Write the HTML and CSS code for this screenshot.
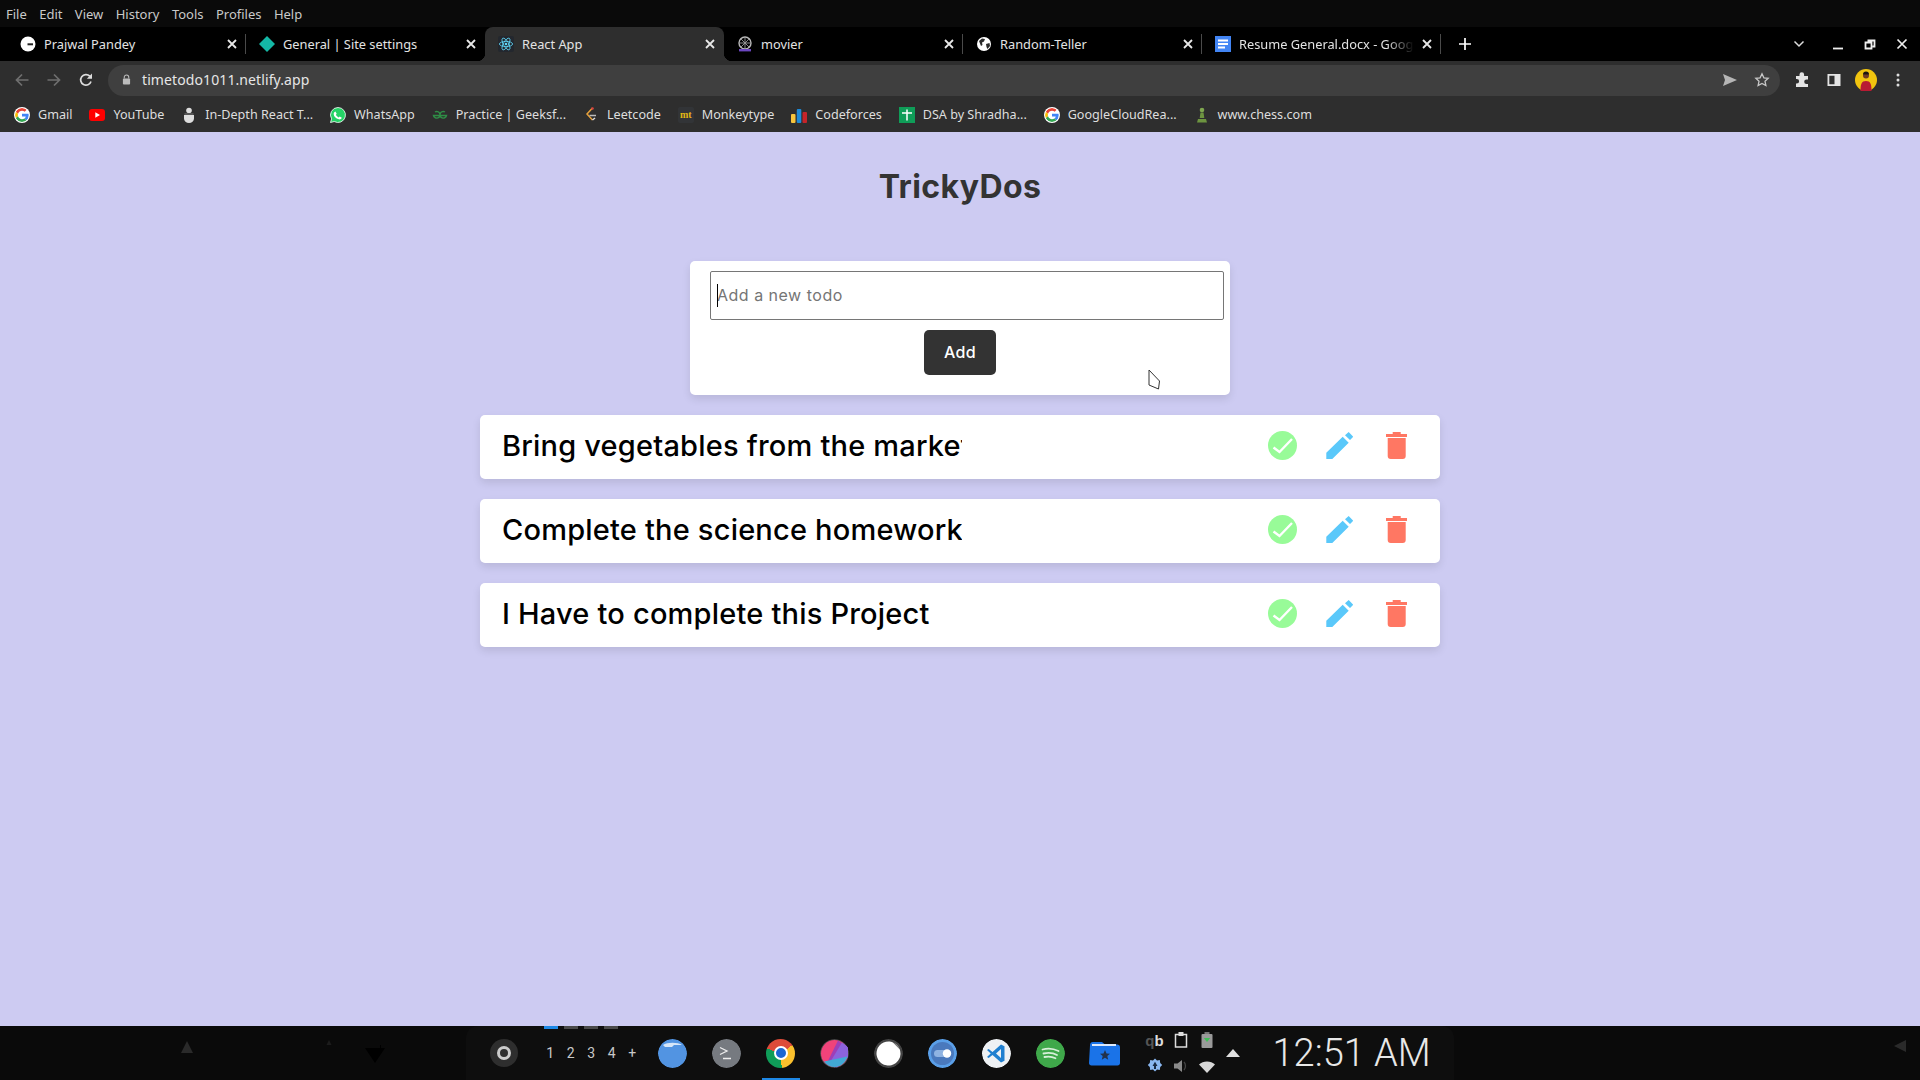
FILE: index.html
```html
<!DOCTYPE html>
<html lang="en">
<head>
    <meta charset="UTF-8">
    <meta name="viewport" content="width=device-width, initial-scale=1.0">
    <title>React App</title>
    <link rel="stylesheet" href="styles.css">
</head>
<body>
    <svg class="defs" width="0" height="0">
        <symbol id="google" viewBox="0 0 48 48">
            <path fill="#EA4335" d="M24 9.5c3.54 0 6.71 1.22 9.21 3.6l6.85-6.85C35.9 2.38 30.47 0 24 0 14.62 0 6.51 5.38 2.56 13.22l7.98 6.19C12.43 13.72 17.74 9.5 24 9.5z"/>
            <path fill="#4285F4" d="M46.98 24.55c0-1.57-.15-3.09-.38-4.55H24v9.02h12.94c-.58 2.96-2.26 5.48-4.78 7.18l7.73 6c4.51-4.18 7.09-10.36 7.09-17.65z"/>
            <path fill="#FBBC05" d="M10.53 28.59c-.48-1.45-.76-2.99-.76-4.59s.27-3.14.76-4.59l-7.98-6.19C.92 16.46 0 20.12 0 24c0 3.88.92 7.54 2.56 10.78l7.97-6.19z"/>
            <path fill="#34A853" d="M24 48c6.48 0 11.93-2.13 15.89-5.81l-7.73-6c-2.15 1.45-4.92 2.3-8.16 2.3-6.26 0-11.57-4.22-13.47-9.91l-7.98 6.19C6.51 42.62 14.62 48 24 48z"/>
        </symbol>
        <symbol id="close" viewBox="0 0 10 10">
            <path d="M1 1l8 8M9 1l-8 8" fill="none" stroke="currentColor" stroke-width="1.8"/>
        </symbol>
        <symbol id="check" viewBox="0 0 29 29">
            <circle cx="14.5" cy="14.5" r="14.5" fill="#98fb98"/>
            <path d="M5.5 16.5l6 4.5L24 8" fill="none" stroke="#fff" stroke-width="2.4"/>
        </symbol>
        <symbol id="pencil" viewBox="0 0 27 27">
            <path fill="#5ac8fa" d="M.3 20.7L16.7 4.7l6 6L6.3 27H.3zM22.7 0l4.6 4.7L24 8l-5-4.7z"/>
        </symbol>
        <symbol id="trash" viewBox="0 0 21 27">
            <path fill="#ff7763" d="M6.7 0h8v2h6.6v3H0V2h6.7zM1.7 6h18v18a3 3 0 0 1-3 3h-12a3 3 0 0 1-3-3z"/>
        </symbol>
    </svg>

    <div class="menubar">
        <span>File</span><span>Edit</span><span>View</span><span>History</span><span>Tools</span><span>Profiles</span><span>Help</span>
    </div>

    <div class="tabstrip">
        <div class="tab sep">
            <svg class="favicon" viewBox="0 0 16 16"><circle cx="8" cy="8" r="7.500" fill="#fff"/><path d="M11.500 5.200A4.500 4.500 0 1 0 12.500 8.700H8.200" fill="none" stroke="#fff" stroke-width="1"/><path d="M7.500 7.300h5.500v2H7.500z" fill="#222"/></svg>
            <span class="tab-title">Prajwal Pandey</span>
            <svg class="tab-close"><use href="#close"/></svg>
        </div>
        <div class="tab">
            <svg class="favicon" viewBox="0 0 16 16"><path d="M8 0l8 8-8 8-8-8z" fill="#14b8a6"/></svg>
            <span class="tab-title">General | Site settings</span>
            <svg class="tab-close"><use href="#close"/></svg>
        </div>
        <div class="tab tab-active">
            <svg class="favicon" viewBox="0 0 16 16">
                <rect width="16" height="16" rx="2" fill="#23272e"/>
                <g fill="none" stroke="#61dafb" stroke-width=".8">
                    <ellipse cx="8" cy="8" rx="6.6" ry="2.6"/>
                    <ellipse cx="8" cy="8" rx="6.6" ry="2.6" transform="rotate(60 8 8)"/>
                    <ellipse cx="8" cy="8" rx="6.6" ry="2.6" transform="rotate(120 8 8)"/>
                </g>
                <circle cx="8" cy="8" r="1.3" fill="#61dafb"/>
            </svg>
            <span class="tab-title">React App</span>
            <svg class="tab-close"><use href="#close"/></svg>
        </div>
        <div class="tab sep">
            <svg class="favicon" viewBox="0 0 16 16">
                <circle cx="8" cy="7" r="6" fill="none" stroke="#b9b9b9" stroke-width="1.4"/>
                <path d="M8 1v12M2 7h12M4 3l8 8M12 3l-8 8" stroke="#9a9a9a" stroke-width=".9"/>
                <rect x="2" y="13" width="12" height="2.4" fill="#6b46c1"/>
            </svg>
            <span class="tab-title">movier</span>
            <svg class="tab-close"><use href="#close"/></svg>
        </div>
        <div class="tab sep">
            <svg class="favicon" viewBox="0 0 16 16">
                <circle cx="8" cy="8" r="7" fill="#fff"/>
                <path d="M3 5l3-2.500 3 .5-1 2.500-2 1 .5 2.500-1.500 1zM10 8l3.500-1 .5 3-2.500 3-1-2z" fill="#2b2b2b"/>
            </svg>
            <span class="tab-title">Random-Teller</span>
            <svg class="tab-close"><use href="#close"/></svg>
        </div>
        <div class="tab sep">
            <svg class="favicon" viewBox="0 0 16 16">
                <rect width="16" height="18" y="-1" rx="1.500" fill="#4285f4"/>
                <path d="M3 3.500h10v2H3zM3 7h10v2H3zM3 10.500h7v2H3z" fill="#fff"/>
            </svg>
            <span class="tab-title tab-fade">Resume General.docx - Google Docs</span>
            <svg class="tab-close"><use href="#close"/></svg>
        </div>
        <svg class="newtab" viewBox="0 0 12 12"><path d="M6 0v12M0 6h12" stroke="#fff" stroke-width="1.700"/></svg>
        <div class="win-controls">
            <svg class="win-chevron" viewBox="0 0 12 12"><path d="M1.500 3.500L6 8l4.500-4.500" fill="none" stroke="#ddd" stroke-width="1.500"/></svg>
            <svg viewBox="0 0 12 12"><path d="M1 10.500h10" stroke="#eee" stroke-width="1.800"/></svg>
            <svg viewBox="0 0 12 12"><path d="M3.500 2.500h7v6h-2M1.500 4.500h6v6h-6z" fill="none" stroke="#eee" stroke-width="1.800"/></svg>
            <svg viewBox="0 0 12 12"><path d="M1.500 1.500l9 9M10.500 1.500l-9 9" stroke="#eee" stroke-width="1.700"/></svg>
        </div>
    </div>

    <div class="toolbar">
        <div class="tool-btn"><svg viewBox="0 0 16 16"><path d="M14.500 8h-12M8 2.500L2.500 8 8 13.500" fill="none" stroke="#6f6f6f" stroke-width="1.700"/></svg></div>
        <div class="tool-btn"><svg viewBox="0 0 16 16"><path d="M1.500 8h12M8 2.500L13.500 8 8 13.500" fill="none" stroke="#6f6f6f" stroke-width="1.700"/></svg></div>
        <div class="tool-btn"><svg viewBox="0 0 16 16"><path d="M13 9.500A5.300 5.300 0 1 1 11.800 4.200" fill="none" stroke="#ddd" stroke-width="1.700"/><path d="M14 1.500v5.200H8.800z" fill="#ddd"/></svg></div>
        <div class="omnibox">
            <svg class="lock" viewBox="0 0 10 12"><path d="M2.500 5V3.500a2.500 2.500 0 0 1 5 0V5" fill="none" stroke="#bbb" stroke-width="1.200"/><rect x="1" y="5" width="8" height="6.500" rx="1" fill="#bbb"/></svg>
            <span class="url">timetodo1011.netlify.app</span>
            <svg class="omni-icon omni-send" viewBox="0 0 16 16"><path d="M1 2l14 6-14 6 2-6z" fill="#b5b5b5"/></svg>
            <svg class="omni-icon" viewBox="0 0 16 16"><path d="M8 1.800l1.900 4 4.300.5-3.200 3 .9 4.300L8 11.500l-3.900 2.100.9-4.300-3.200-3 4.300-.5z" fill="none" stroke="#c8c8c8" stroke-width="1.300"/></svg>
        </div>
        <div class="tool-btn"><svg class="puzzle" viewBox="0 0 16 16"><path d="M5.500 2.500a2.300 2.300 0 0 1 4.600 0V4H14v3.500h-1.500a2.300 2.300 0 0 0 0 4.600H14V15H2v-3.500h.8a2.300 2.300 0 0 0 0-4.600H2V4h3.500z" fill="#e4e4e4"/></svg></div>
        <div class="tool-btn"><svg viewBox="0 0 16 16"><path d="M1.500 2h13v12h-13zM3.300 3.800v8.400h5.200V3.800z" fill="#e4e4e4" fill-rule="evenodd"/></svg></div>
        <div class="tool-btn">
            <svg class="avatar" viewBox="0 0 22 22">
                <circle cx="11" cy="11" r="11" fill="#f1c40f"/>
                <path d="M5.500 22c0-7 1-10 5.500-10s5.500 3 5.500 10z" fill="#b81b33"/>
                <circle cx="11" cy="6.500" r="3" fill="#6d3b25"/>
                <path d="M8 5.500a3 3 0 0 1 6 0z" fill="#1d1411"/>
            </svg>
        </div>
        <div class="tool-btn"><svg viewBox="0 0 16 16"><circle cx="8" cy="3" r="1.500" fill="#ddd"/><circle cx="8" cy="8" r="1.500" fill="#ddd"/><circle cx="8" cy="13" r="1.500" fill="#ddd"/></svg></div>
    </div>

    <div class="bookmarks">
        <div class="bookmark"><svg class="favicon g-icon"><use href="#google"/></svg>Gmail</div>
        <div class="bookmark"><svg class="favicon" viewBox="0 0 16 16"><rect y="2" width="16" height="12" rx="3" fill="#f00"/><path d="M6.300 5.200L11 8l-4.700 2.800z" fill="#fff"/></svg>YouTube</div>
        <div class="bookmark"><svg class="favicon" viewBox="0 0 16 16"><circle cx="8" cy="3.500" r="2.800" fill="#ddd"/><path d="M3 8h10v3.500a5 4.500 0 0 1-10 0z" fill="#ddd"/><rect x="3.500" y="6" width="9" height="2" fill="#555"/></svg>In-Depth React T...</div>
        <div class="bookmark"><svg class="favicon" viewBox="0 0 16 16"><path d="M8 .5a7.500 7.500 0 0 0-6.400 11.400L.5 15.500l3.700-1A7.500 7.500 0 1 0 8 .5z" fill="#25d366" stroke="#fff" stroke-width=".8"/><path d="M5.400 4.500l1.300 2.300-.8 1c.7 1.300 1.600 2.100 2.800 2.700l1-.9 2.100 1.200c-.4 1.300-1.900 1.800-3 1.500C5.800 11.600 3.900 9.400 3.700 7.200c-.1-1.200.6-2.400 1.700-2.700z" fill="#fff"/></svg>WhatsApp</div>
        <div class="bookmark"><svg class="favicon" viewBox="0 0 16 16"><path d="M8 8.500H14.500A3.300 3.300 0 1 1 13 5M8 8.500H1.500A3.300 3.300 0 1 0 3 5" fill="none" stroke="#2f8d46" stroke-width="1.400"/></svg>Practice | Geeksf...</div>
        <div class="bookmark"><svg class="favicon" viewBox="0 0 16 16"><path d="M9.500 1L4 7l5.500 6" fill="none" stroke="#e7a13a" stroke-width="1.500"/><path d="M6.500 8.500H13" stroke="#bbb" stroke-width="1.500"/><path d="M9.500 13L12 11" stroke="#ddd" stroke-width="1.500"/><circle cx="9.500" cy="1.500" r="1.300" fill="#d9453f"/></svg>Leetcode</div>
        <div class="bookmark"><span class="favicon mt-icon">mt</span>Monkeytype</div>
        <div class="bookmark"><svg class="favicon" viewBox="0 0 16 16"><rect y="7" width="4.500" height="9" rx="1" fill="#f6c43d"/><rect x="5.800" y="2" width="4.500" height="14" rx="1" fill="#1d8ad8"/><rect x="11.500" y="5" width="4.500" height="11" rx="1" fill="#c4242a"/></svg>Codeforces</div>
        <div class="bookmark"><svg class="favicon" viewBox="0 0 16 16"><rect width="16" height="16" fill="#0f9d58"/><path d="M8 2.500v11M3 6h10" stroke="#fff" stroke-width="1.500"/></svg>DSA by Shradha...</div>
        <div class="bookmark"><svg class="favicon g-icon"><use href="#google"/></svg>GoogleCloudRea...</div>
        <div class="bookmark"><svg class="favicon" viewBox="0 0 16 16"><circle cx="8" cy="3" r="2.300" fill="#7fa650"/><path d="M6.500 5.500h3l.8 5.500H5.700zM4 12h8l1 3.500H3z" fill="#6d9440"/></svg>www.chess.com</div>
    </div>

    <main class="page">
        <h1 class="app-title">TrickyDos</h1>

        <form class="todo-form">
            <input class="todo-input" type="text" placeholder="Add a new todo">
            <span class="caret"></span>
            <button class="add-btn" type="button">Add</button>
            <svg class="mouse" viewBox="0 0 13 21"><path d="M1 1l10.500 11-1 8L1 16z" fill="#fff" stroke="#333" stroke-width="1"/></svg>
        </form>

        <ul class="todo-list">
            <li class="todo-item">
                <span class="todo-text">Bring vegetables from the market</span>
                <div class="todo-actions">
                    <svg class="icon-check"><use href="#check"/></svg>
                    <svg class="icon-edit"><use href="#pencil"/></svg>
                    <svg class="icon-trash"><use href="#trash"/></svg>
                </div>
            </li>
            <li class="todo-item">
                <span class="todo-text">Complete the science homework</span>
                <div class="todo-actions">
                    <svg class="icon-check"><use href="#check"/></svg>
                    <svg class="icon-edit"><use href="#pencil"/></svg>
                    <svg class="icon-trash"><use href="#trash"/></svg>
                </div>
            </li>
            <li class="todo-item">
                <span class="todo-text">I Have to complete this Project</span>
                <div class="todo-actions">
                    <svg class="icon-check"><use href="#check"/></svg>
                    <svg class="icon-edit"><use href="#pencil"/></svg>
                    <svg class="icon-trash"><use href="#trash"/></svg>
                </div>
            </li>
        </ul>
    </main>

    <footer class="taskbar">
        <svg class="ghost ghost-a" viewBox="0 0 12 12"><path d="M6 0l6 12H0z" fill="#2a2a2a"/></svg>
        <svg class="ghost ghost-c" viewBox="0 0 12 12"><path d="M6 0l6 12H0z" fill="#1c1c1c"/></svg>
        <svg class="ghost ghost-d" viewBox="0 0 20 18"><path d="M0 3h20L10 18z" fill="#000"/><path d="M15 0h1v4h-1z" fill="#000"/></svg>
        <svg class="ghost ghost-b" viewBox="0 0 12 12"><path d="M12 0v12L0 6z" fill="#2a2a2a"/></svg>
        <div class="panel">
            <div class="launcher"><span></span></div>
            <div class="workspaces">
                <div class="ws-strip"><i class="ws-on"></i><i></i><i></i><i></i></div>
                <span>1</span><span>2</span><span>3</span><span>4</span><span>+</span>
            </div>
            <div class="dock">
                <div class="dock-item">
                    <svg viewBox="0 0 29 29"><circle cx="14.500" cy="14.500" r="14.500" fill="#5294e2"/><path d="M5 6c4-3 15-3 19 0h-8l-2 2H7z" fill="#d6e6f8"/></svg>
                </div>
                <div class="dock-item">
                    <svg viewBox="0 0 29 29"><circle cx="14.500" cy="14.500" r="14.500" fill="#767a80"/><path d="M8 8.500l7 3.500-7 3.500M11 19.500h8" fill="none" stroke="#eee" stroke-width="1.300"/></svg>
                </div>
                <div class="dock-item dock-active"><span class="chrome-logo"><span></span></span></div>
                <div class="dock-item">
                    <svg viewBox="0 0 29 29">
                        <circle cx="14.500" cy="14.500" r="14.500" fill="#444"/>
                        <circle cx="14.500" cy="14.500" r="13.500" fill="#f0437a"/>
                        <path d="M18 1.500L7 24l8 4.500L28 18V8z" fill="#9d3fb8"/>
                        <path d="M22 3.500L9 25l8 3.500L28 18V8z" fill="#8c63dc"/>
                        <path d="M4 22.500L27.500 17.500C25.500 24 20 28 14.500 28 10 28 6.500 26 4 22.500z" fill="#41a9d4"/>
                    </svg>
                </div>
                <div class="dock-item">
                    <svg viewBox="0 0 29 29"><circle cx="14.500" cy="14.500" r="14.500" fill="#444"/><path d="M14.500 2.500c1.800 0 3 .3 4.500.9l6.700 6.800A12 12 0 1 1 14.500 2.500z" fill="#fff"/><path d="M19.500 3.500l6.300 6.500c-1.500-4-3.500-5.500-6.300-6.500z" fill="#999"/></svg>
                </div>
                <div class="dock-item">
                    <svg viewBox="0 0 29 29"><circle cx="14.500" cy="14.500" r="14.500" fill="#5a9fe8"/><circle cx="14.500" cy="14.500" r="11.500" fill="#4a79bd"/><rect x="6" y="11" width="17" height="7" rx="3.500" fill="#8fb3e2"/><circle cx="19" cy="14.500" r="4.200" fill="#fff"/></svg>
                </div>
                <div class="dock-item">
                    <svg viewBox="0 0 29 29"><circle cx="14.500" cy="14.500" r="14.500" fill="#eef1f4"/><path d="M19 5.500l3.500 1.700v14.600L19 23.500 10.500 16l-3.800 3-1.700-1 3.700-3.500L5 11l1.700-1 3.800 3zM19 10l-5 4.500 5 4.500z" fill="#1f7fd0"/></svg>
                </div>
                <div class="dock-item">
                    <svg viewBox="0 0 29 29"><circle cx="14.500" cy="14.500" r="14.500" fill="#3fa84a"/><path d="M6.500 10.500c5-1.500 11-1 16 1.500M7.500 14.500c4.500-1 9.500-.8 13.500 1.500M8.500 18c4-.8 7.500-.5 11 1.200" fill="none" stroke="#d8efd9" stroke-width="1.800" stroke-linecap="round"/></svg>
                </div>
                <div class="dock-item">
                    <svg class="folder" viewBox="0 0 32 25"><path d="M1 4.500C1 2 2 1 4 1h9l3 2.500h12c2 0 3 1 3 3V22c0 1.500-1 2.500-2.500 2.500h-26C1 24.500 0 23.500 0 22z" fill="#1a73e8"/><path d="M3 3h24v2H3z" fill="#dce9fb"/><path d="M16 9l1.500 3.500 3.500.3-2.700 2.300.9 3.600L16 16.800l-3.200 1.900.9-3.600-2.700-2.300 3.500-.3z" fill="#22324a"/></svg>
                </div>
            </div>
            <div class="tray">
                <span class="tray-qb"><b>q</b>b</span>
                <svg viewBox="0 0 16 18"><path d="M2.500 3.500h11v12.500h-11z" fill="none" stroke="#ddd" stroke-width="1.500"/><rect x="5.500" y="1" width="5" height="4" fill="#ddd"/></svg>
                <svg viewBox="0 0 16 18"><rect x="2.500" y="3" width="11" height="14" rx="1" fill="#9a9a9a"/><rect x="5.500" y="1" width="5" height="2" fill="#777"/><path d="M4.800 7h6.400L8 11z" fill="#3fbf57"/></svg>
                <svg viewBox="0 0 16 18"><path d="M8 1.500l2 2 2.800-.4.400 2.800 2 2.100-2 2.100-.4 2.800-2.800-.4-2 2-2-2-2.800.4-.4-2.800-2-2.100 2-2.100.4-2.800 2.800.4z" fill="#8ab8f2"/><path d="M8 4.800L10.500 9H9v3H7V9H5.500z" fill="#1a2c46"/></svg>
                <svg viewBox="0 0 16 18"><path d="M1 6.500h3.500L9 3v12L4.500 11.500H1z" fill="#8a8a8a"/><path d="M11 5c2 2 2 6 0 8" fill="none" stroke="#444" stroke-width="1.300"/></svg>
                <svg viewBox="0 0 16 18"><path d="M0 7.500C4 3.500 12 3.500 16 7.500L8 16z" fill="#d8d8d8"/></svg>
            </div>
            <svg class="tray-up" viewBox="0 0 14 8"><path d="M7 0l7 8H0z" fill="#e0e0e0"/></svg>
            <div class="clock">12:51 AM</div>
        </div>
    </footer>
</body>
</html>
```

FILE: styles.css
```css
* {
    box-sizing: border-box;
}
body {
    margin: 0;
    height: 100vh;
    display: flex;
    flex-direction: column;
    overflow: hidden;
    font-family: "Noto Sans", sans-serif;
    background-color: #0a0a0a;
}
.defs {
    position: absolute;
}

/* Browser chrome */
.menubar {
    height: 27px;
    display: flex;
    align-items: center;
    gap: 12.4px;
    padding-left: 6px;
    background-color: #0a0a0a;
    color: #c9c9c9;
    font-size: 13px;
}
.tabstrip {
    height: 34px;
    display: flex;
    align-items: center;
    padding-left: 7px;
    background-color: #000;
}
.tab {
    position: relative;
    flex: 0 0 239px;
    min-width: 0;
    height: 34px;
    display: flex;
    align-items: center;
    gap: 8px;
    padding: 0 9px 0 13px;
    color: #e3e3e3;
    font-size: 12.8px;
}
.tab.sep::after {
    content: "";
    position: absolute;
    right: 0;
    top: 7px;
    width: 1px;
    height: 20px;
    background-color: #4a4a4a;
}
.tab-active {
    background-color: #2e2e2e;
    border-radius: 8px 8px 0 0;
}
.tab-active::before,
.tab-active::after {
    content: "";
    position: absolute;
    bottom: 0;
    width: 8px;
    height: 8px;
}
.tab-active::before {
    left: -8px;
    background: radial-gradient(circle at 0 0, transparent 8px, #2e2e2e 8.5px);
}
.tab-active::after {
    right: -8px;
    background: radial-gradient(circle at 100% 0, transparent 8px, #2e2e2e 8.5px);
}
.favicon {
    flex: 0 0 16px;
    width: 16px;
    height: 16px;
}
.g-icon {
    background-color: #fff;
    border-radius: 50%;
    padding: 1px;
}
.tab-title {
    flex: 1;
    min-width: 0;
    overflow: hidden;
    white-space: nowrap;
}
.tab-fade {
    -webkit-mask-image: linear-gradient(to right, #000 84%, transparent 100%);
    mask-image: linear-gradient(to right, #000 84%, transparent 100%);
}
.tab-close {
    flex: 0 0 10px;
    width: 10px;
    height: 10px;
    color: #e8e8e8;
}
.newtab {
    width: 12px;
    height: 12px;
    margin-left: 18px;
}
.win-controls {
    margin-left: auto;
    display: flex;
    align-items: center;
    padding-right: 2px;
}
.win-controls svg {
    width: 12px;
    height: 12px;
    margin: 0 10px;
}
.win-controls .win-chevron {
    margin-right: 17px;
}

.toolbar {
    height: 38px;
    display: flex;
    align-items: flex-start;
    padding: 4px 6px 0;
    background-color: #2e2e2e;
}
.tool-btn {
    flex: 0 0 32px;
    height: 30px;
    display: flex;
    align-items: center;
    justify-content: center;
}
.tool-btn svg {
    width: 16px;
    height: 16px;
}
.tool-btn .avatar {
    width: 22px;
    height: 22px;
}
.omnibox {
    flex: 1;
    height: 31px;
    display: flex;
    align-items: center;
    margin: 0 6px;
    padding: 0 10px 2px 14px;
    border-radius: 16px;
    background-color: #3f3f3f;
}
.lock {
    width: 9px;
    height: 11px;
}
.url {
    flex: 1;
    margin-left: 11px;
    color: #e6e6e6;
    font-size: 14px;
    letter-spacing: 0.1px;
}
.omni-icon {
    width: 16px;
    height: 16px;
}
.omni-send {
    margin-right: 16px;
}

.bookmarks {
    height: 33px;
    display: flex;
    align-items: center;
    gap: 16.9px;
    padding: 0 0 2px 14px;
    background-color: #2e2e2e;
    color: #dedede;
    font-size: 12.6px;
}
.bookmark {
    display: flex;
    align-items: center;
    gap: 8px;
    white-space: nowrap;
}
.mt-icon {
    background-color: #323437;
    border-radius: 2px;
    color: #e2b714;
    font-family: "Liberation Serif", serif;
    font-weight: bold;
    font-size: 10px;
    line-height: 16px;
    text-align: center;
}

/* The todo app */
.page {
    flex: 1;
    display: flex;
    flex-direction: column;
    align-items: center;
    background-color: #cdcbf2;
    font-family: Inter, sans-serif;
}
.app-title {
    margin: 25px 0 0;
    height: 104px;
    color: #333;
    font-size: 32px;
    font-weight: 700;
    line-height: 60px;
    letter-spacing: 0.4px;
}
.todo-form {
    position: relative;
    width: 540px;
    height: 134px;
    padding: 10px 0 0 20px;
    background-color: #fff;
    border-radius: 5px;
    box-shadow: 0 4px 8px rgba(0, 0, 0, 0.1);
    text-align: center;
}
.todo-input {
    display: block;
    width: 514px;
    height: 49px;
    padding: 0 6px 2px;
    border: 1px solid #767676;
    border-radius: 2px;
    font-family: Inter, sans-serif;
    font-size: 16px;
    letter-spacing: 0.5px;
}
.todo-input::placeholder {
    color: #757575;
}
.caret {
    position: absolute;
    left: 27px;
    top: 23px;
    width: 1px;
    height: 23px;
    background-color: #000;
}
.add-btn {
    display: block;
    width: 72px;
    height: 45px;
    margin: 10px 0 0 214px;
    padding: 0 0 2px;
    border: none;
    border-radius: 5px;
    background-color: #333;
    color: #fff;
    font-family: Inter, sans-serif;
    font-size: 16px;
    font-weight: 500;
    letter-spacing: 0.3px;
}
.mouse {
    position: absolute;
    left: 458px;
    top: 108px;
    width: 13px;
    height: 21px;
}
.todo-list {
    list-style: none;
    width: 960px;
    margin: 20px 0 0;
    padding: 0;
    display: flex;
    flex-direction: column;
    gap: 20px;
}
.todo-item {
    height: 64px;
    display: flex;
    align-items: center;
    justify-content: space-between;
    padding: 0 15px 3px 22px;
    background-color: #fff;
    border-radius: 5px;
    box-shadow: 0 4px 8px rgba(0, 0, 0, 0.1);
}
.todo-text {
    width: 460px;
    overflow: hidden;
    white-space: nowrap;
    color: #000;
    font-size: 29px;
    font-weight: 500;
    letter-spacing: 0.2px;
}
.todo-actions {
    display: grid;
    grid-template-columns: repeat(3, 57px);
    justify-items: center;
    align-items: center;
}
.icon-check {
    width: 29px;
    height: 29px;
}
.icon-edit {
    width: 27px;
    height: 27px;
}
.icon-trash {
    width: 21px;
    height: 27px;
}

/* Desktop panel */
.taskbar {
    position: relative;
    height: 54px;
    display: flex;
    justify-content: center;
    background-color: #0a0a0a;
}
.ghost {
    position: absolute;
    width: 12px;
    height: 12px;
}
.ghost-a {
    left: 181px;
    top: 15px;
}
.ghost-b {
    right: 14px;
    top: 14px;
}
.ghost-c {
    left: 325px;
    top: 14px;
    width: 8px;
    height: 5px;
}
.ghost-d {
    left: 365px;
    top: 19px;
    width: 20px;
    height: 18px;
}
.panel {
    position: relative;
    width: 988px;
    display: flex;
    align-items: center;
    padding-left: 24px;
    background-color: #0e0e0e;
    border-radius: 12px 12px 0 0;
}
.launcher {
    flex: 0 0 28px;
    height: 28px;
    display: flex;
    align-items: center;
    justify-content: center;
    border-radius: 50%;
    background-color: #2e2e2e;
}
.launcher span {
    width: 14px;
    height: 14px;
    border: 3px solid #ccc;
    border-radius: 50%;
}
.workspaces {
    display: flex;
    margin-left: 22px;
    color: #c8c8c8;
    font-family: Roboto, sans-serif;
    font-size: 14px;
}
.workspaces span {
    width: 20.5px;
    text-align: center;
}
.ws-strip {
    position: absolute;
    left: 78px;
    top: 0;
    display: flex;
    gap: 6px;
}
.ws-strip i {
    width: 14px;
    height: 3px;
    background-color: #4a4a4a;
}
.ws-strip .ws-on {
    background-color: #1e88e5;
}
.dock {
    display: flex;
    margin-left: 3px;
}
.dock-item {
    position: relative;
    flex: 0 0 54px;
    height: 54px;
    display: flex;
    align-items: center;
    justify-content: center;
}
.dock-item svg,
.dock-item > span {
    width: 29px;
    height: 29px;
    border-radius: 50%;
}
.dock-item .folder {
    width: 32px;
    height: 25px;
    border-radius: 0;
}
.dock-active::after {
    content: "";
    position: absolute;
    left: 8px;
    bottom: 0;
    width: 38px;
    height: 2px;
    background-color: #1e88e5;
}
.chrome-logo {
    display: flex;
    align-items: center;
    justify-content: center;
    background: conic-gradient(from -70deg, #dd4b39 0 125deg, #fbc02d 125deg 245deg, #0f9d58 245deg 360deg);
}
.dock-item .chrome-logo span {
    width: 14px;
    height: 14px;
    border: 2px solid #fff;
    border-radius: 50%;
    background-color: #1a66d2;
}
.tray {
    display: grid;
    grid-template-columns: repeat(3, 26px);
    grid-template-rows: 26px 26px;
    justify-items: center;
    align-items: center;
    margin-left: 10px;
}
.tray svg {
    width: 16px;
    height: 18px;
}
.tray-qb {
    color: #ddd;
    font-family: "Liberation Sans", sans-serif;
    font-size: 15px;
    font-weight: 700;
}
.tray-qb b {
    color: #555;
}
.tray-up {
    width: 14px;
    height: 8px;
    margin-left: 6px;
}
.clock {
    margin-left: 33px;
    color: #e8e8e8;
    font-family: Roboto, sans-serif;
    font-size: 38px;
    font-weight: 300;
    white-space: nowrap;
}
```
